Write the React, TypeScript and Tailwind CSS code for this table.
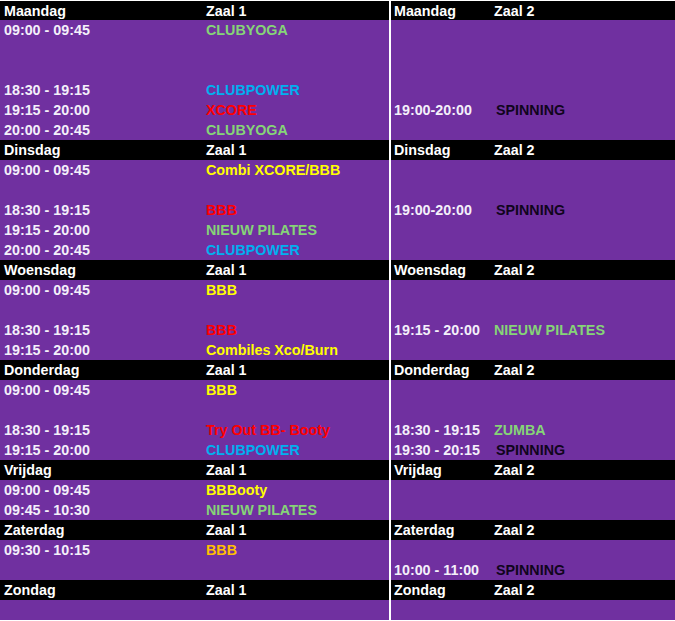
type Row =
  | { kind: "head"; day: string; zaal: string }
  | { kind: "slot"; time?: string; name?: string; color?: string };

const green = "text-[#86d477]";
const blue = "text-[#00b0f0]";
const red = "text-[#ff0000]";
const yellow = "text-[#ffff00]";
const orange = "text-[#ffc000]";
const dark = "text-[#10051c] pl-[2px]";

const empty: Row = { kind: "slot" };

const zaal1: Row[] = [
  { kind: "head", day: "Maandag", zaal: "Zaal 1" },
  { kind: "slot", time: "09:00 - 09:45", name: "CLUBYOGA", color: green },
  empty,
  empty,
  { kind: "slot", time: "18:30 - 19:15", name: "CLUBPOWER", color: blue },
  { kind: "slot", time: "19:15 - 20:00", name: "XCORE", color: red },
  { kind: "slot", time: "20:00 - 20:45", name: "CLUBYOGA", color: green },
  { kind: "head", day: "Dinsdag", zaal: "Zaal 1" },
  { kind: "slot", time: "09:00 - 09:45", name: "Combi XCORE/BBB", color: yellow },
  empty,
  { kind: "slot", time: "18:30 - 19:15", name: "BBB", color: red },
  { kind: "slot", time: "19:15 - 20:00", name: "NIEUW PILATES", color: green },
  { kind: "slot", time: "20:00 - 20:45", name: "CLUBPOWER", color: blue },
  { kind: "head", day: "Woensdag", zaal: "Zaal 1" },
  { kind: "slot", time: "09:00 - 09:45", name: "BBB", color: yellow },
  empty,
  { kind: "slot", time: "18:30 - 19:15", name: "BBB", color: red },
  { kind: "slot", time: "19:15 - 20:00", name: "Combiles Xco/Burn", color: yellow },
  { kind: "head", day: "Donderdag", zaal: "Zaal 1" },
  { kind: "slot", time: "09:00 - 09:45", name: "BBB", color: yellow },
  empty,
  { kind: "slot", time: "18:30 - 19:15", name: "Try Out BB- Booty", color: red },
  { kind: "slot", time: "19:15 - 20:00", name: "CLUBPOWER", color: blue },
  { kind: "head", day: "Vrijdag", zaal: "Zaal 1" },
  { kind: "slot", time: "09:00 - 09:45", name: "BBBooty", color: yellow },
  { kind: "slot", time: "09:45 - 10:30", name: "NIEUW PILATES", color: green },
  { kind: "head", day: "Zaterdag", zaal: "Zaal 1" },
  { kind: "slot", time: "09:30 - 10:15", name: "BBB", color: orange },
  empty,
  { kind: "head", day: "Zondag", zaal: "Zaal 1" },
  empty,
];

const zaal2: Row[] = [
  { kind: "head", day: "Maandag", zaal: "Zaal 2" },
  empty,
  empty,
  empty,
  empty,
  { kind: "slot", time: "19:00-20:00", name: "SPINNING", color: dark },
  empty,
  { kind: "head", day: "Dinsdag", zaal: "Zaal 2" },
  empty,
  empty,
  { kind: "slot", time: "19:00-20:00", name: "SPINNING", color: dark },
  empty,
  empty,
  { kind: "head", day: "Woensdag", zaal: "Zaal 2" },
  empty,
  empty,
  { kind: "slot", time: "19:15 - 20:00", name: "NIEUW PILATES", color: green },
  empty,
  { kind: "head", day: "Donderdag", zaal: "Zaal 2" },
  empty,
  empty,
  { kind: "slot", time: "18:30 - 19:15", name: "ZUMBA", color: green },
  { kind: "slot", time: "19:30 - 20:15", name: "SPINNING", color: dark },
  { kind: "head", day: "Vrijdag", zaal: "Zaal 2" },
  empty,
  empty,
  { kind: "head", day: "Zaterdag", zaal: "Zaal 2" },
  empty,
  { kind: "slot", time: "10:00 - 11:00", name: "SPINNING", color: dark },
  { kind: "head", day: "Zondag", zaal: "Zaal 2" },
  empty,
];

function Column({ rows, first, pad }: { rows: Row[]; first: string; pad: string }) {
  return (
    <div className="flex flex-col">
      {rows.map((r, i) => (
        <div
          key={i}
          className={`flex items-center whitespace-nowrap ${i === 0 ? "h-[19px]" : "h-[20px]"} ${
            r.kind === "head" ? "bg-black" : "bg-[#7030a0]"
          } ${pad}`}
        >
          {r.kind === "head" ? (
            <>
              <span className={`${first} text-white`}>{r.day}</span>
              <span className="text-white">{r.zaal}</span>
            </>
          ) : (
            <>
              <span className={`${first} text-[#f4f0fa]`}>{r.time}</span>
              <span className={r.color}>{r.name}</span>
            </>
          )}
        </div>
      ))}
    </div>
  );
}

export default function App() {
  return (
    <div
      className="w-[675px] h-[621px] overflow-hidden bg-white pt-[1px] grid grid-cols-[389px_284px] gap-x-[2px] text-[14.3px] font-bold leading-[20px]"
      style={{ fontFamily: '"Liberation Sans", Arial, sans-serif' }}
    >
      <Column rows={zaal1} first="w-[202px]" pad="pl-[4px]" />
      <Column rows={zaal2} first="w-[100px]" pad="pl-[3px]" />
    </div>
  );
}
